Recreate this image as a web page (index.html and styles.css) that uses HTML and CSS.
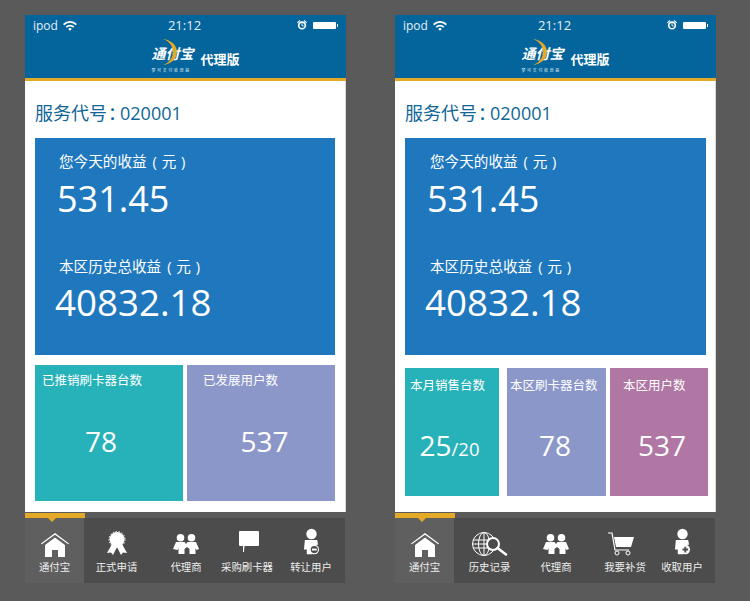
FILE: index.html
```html
<!DOCTYPE html>
<html lang="zh-CN">
<head>
  <meta charset="UTF-8" />
  <meta name="viewport" content="width=device-width, initial-scale=1.0" />
  <title>通付宝 代理版</title>
  <link rel="stylesheet" href="styles.css">
</head>
<body>
  <svg class="defs" width="0" height="0">
    <symbol id="i-wifi" viewBox="0 0 16 12"><path d="M0 4.2a11 11 0 0 1 16 0l-1.400 1.500a9 9 0 0 0-13.200 0zM3 7.200a7 7 0 0 1 10 0l-1.400 1.500a5 5 0 0 0-7.200 0zM5.900 10a3 3 0 0 1 4.200 0L8 12z" fill="#fff"/></symbol>
    <symbol id="i-alarm" viewBox="0 0 12 12"><circle cx="6" cy="6.500" r="4" fill="none" stroke="#fff" stroke-width="2"/><path d="M0 3l3-3 1 1-3 3zM12 3L9 0 8 1l3 3z" fill="#fff"/><path d="M6 4v3h2" fill="none" stroke="#fff"/></symbol>
    <symbol id="i-home" viewBox="0 0 28 24"><path d="M0 10.500L14 0l14 10.500-.8.800L14 1.800.8 11.300z" fill="#fff"/><path d="M14 4.500l10 7.500v12h-7v-7h-6v7H4V12z" fill="#fff"/></symbol>
    <symbol id="i-badge" viewBox="0 0 20 24"><path d="M5 13L0 22l4-.5 2 2.500 4-8 4 8 2-2.500 4 .5-5-9z" fill="#fff"/><circle cx="10" cy="8.500" r="7.500" fill="#fff"/><circle cx="10" cy="8.500" r="8" fill="none" stroke="#fff" stroke-dasharray="1.500 1.500"/></symbol>
    <symbol id="i-people" viewBox="0 0 26 20"><g fill="#fff"><circle cx="7.500" cy="3.800" r="3.800"/><circle cx="18.500" cy="3.800" r="3.800"/><path d="M3 8h8.500l1.500 2 1.500-2H23l3 7-2.500 1-1-2v6h-6v-5l-2.500-2-2.500 2v5h-6v-6l-1 2L0 15z"/></g></symbol>
    <symbol id="i-bubble" viewBox="0 0 20 21"><path d="M1 0h18a1 1 0 0 1 1 1v13a1 1 0 0 1-1 1H5.500L5 21h-1v-6H1a1 1 0 0 1-1-1V1a1 1 0 0 1 1-1z" fill="#fff"/></symbol>
    <symbol id="i-minus" viewBox="0 0 18 28"><circle cx="9" cy="5.500" r="5.500" fill="#fff"/><path d="M2 12h13l1 5a6.500 6.500 0 0 0-6 10H4v-5H1z" fill="#fff"/><circle cx="12" cy="22" r="5" fill="#fff"/><circle cx="12" cy="22" r="3.800" fill="#4c4c4c"/><path d="M9.500 21h5v2h-5z" fill="#fff"/></symbol>
    <symbol id="i-plus" viewBox="0 0 18 28"><circle cx="9" cy="5.500" r="5.500" fill="#fff"/><path d="M2 12h13l1 5a6.500 6.500 0 0 0-6 10H4v-5H1z" fill="#fff"/><circle cx="12" cy="22" r="5" fill="#fff"/><path d="M11 19h2v2h2v2h-2v2h-2v-2H9v-2h2z" fill="#4c4c4c"/></symbol>
    <symbol id="i-globe" viewBox="0 0 36 24"><g fill="none" stroke="#fff"><circle cx="12" cy="12" r="11.500"/><ellipse cx="12" cy="12" rx="5.500" ry="11.500"/><path d="M12 0v24M1 8h22M0.500 12h23M1 16h22"/></g><circle cx="21" cy="12" r="6" fill="#4c4c4c" stroke="#fff" stroke-width="2"/><path d="M25.500 16l8.500 6.500" stroke="#fff" stroke-width="2.500" stroke-linecap="round"/></symbol>
    <symbol id="i-cart" viewBox="0 0 26 24"><path d="M0 1h4l3 17h14" fill="none" stroke="#fff" stroke-width="1.200"/><path d="M6 5h20l-3 10H8z" fill="#fff"/><circle cx="9" cy="21" r="2" fill="none" stroke="#fff"/><circle cx="20" cy="21" r="2" fill="none" stroke="#fff"/></symbol>
    <symbol id="i-arc" viewBox="0 0 14 26"><path d="M0 0c8 1 14 6 14 13s-6 12-14 13c6-2 10-7 10-13S6 2 0 0z" fill="#e3a927"/></symbol>
  </svg>

  <section class="phone">
    <div class="status">
      <span class="carrier">ipod <svg class="wifi"><use href="#i-wifi"/></svg></span>
      <span class="clock">21:12</span>
      <span class="status-right"><svg class="alarm"><use href="#i-alarm"/></svg><i class="battery"></i></span>
    </div>
    <header class="brand">
      <div class="logo">
        <span class="logo-name">通付宝</span>
        <svg class="arc"><use href="#i-arc"/></svg>
        <span class="logo-sub">梦 可 支 付 收 款 器</span>
      </div>
      <span class="edition">代理版</span>
    </header>
    <main class="content">
      <h2 class="code">服务代号<span class="colon">：</span>020001</h2>
      <div class="earnings">
        <p class="earn-label">您今天的收益<span class="paren">( 元 )</span></p>
        <p class="earn-value">531.45</p>
        <p class="earn-label second">本区历史总收益<span class="paren">( 元 )</span></p>
        <p class="earn-value long">40832.18</p>
      </div>
      <div class="tiles two">
        <div class="tile teal"><p class="tile-label">已推销刷卡器台数</p><p class="tile-value">78</p></div>
        <div class="tile lilac"><p class="tile-label">已发展用户数</p><p class="tile-value">537</p></div>
      </div>
    </main>
    <div class="marker"></div>
    <nav class="tabs tabs-a">
      <a class="tab active"><svg class="ico home"><use href="#i-home"/></svg>通付宝</a>
      <a class="tab"><svg class="ico badge"><use href="#i-badge"/></svg>正式申请</a>
      <a class="tab"><svg class="ico people"><use href="#i-people"/></svg>代理商</a>
      <a class="tab"><svg class="ico bubble"><use href="#i-bubble"/></svg>采购刷卡器</a>
      <a class="tab"><svg class="ico person"><use href="#i-minus"/></svg>转让用户</a>
    </nav>
  </section>

  <section class="phone">
    <div class="status">
      <span class="carrier">ipod <svg class="wifi"><use href="#i-wifi"/></svg></span>
      <span class="clock">21:12</span>
      <span class="status-right"><svg class="alarm"><use href="#i-alarm"/></svg><i class="battery"></i></span>
    </div>
    <header class="brand">
      <div class="logo">
        <span class="logo-name">通付宝</span>
        <svg class="arc"><use href="#i-arc"/></svg>
        <span class="logo-sub">梦 可 支 付 收 款 器</span>
      </div>
      <span class="edition">代理版</span>
    </header>
    <main class="content">
      <h2 class="code">服务代号<span class="colon">：</span>020001</h2>
      <div class="earnings">
        <p class="earn-label">您今天的收益<span class="paren">( 元 )</span></p>
        <p class="earn-value">531.45</p>
        <p class="earn-label second">本区历史总收益<span class="paren">( 元 )</span></p>
        <p class="earn-value long">40832.18</p>
      </div>
      <div class="tiles three">
        <div class="tile teal"><p class="tile-label">本月销售台数</p><p class="tile-value">25<small>/20</small></p></div>
        <div class="tile lilac"><p class="tile-label">本区刷卡器台数</p><p class="tile-value">78</p></div>
        <div class="tile plum"><p class="tile-label">本区用户数</p><p class="tile-value">537</p></div>
      </div>
    </main>
    <div class="marker"></div>
    <nav class="tabs tabs-b">
      <a class="tab active"><svg class="ico home"><use href="#i-home"/></svg>通付宝</a>
      <a class="tab"><svg class="ico globe"><use href="#i-globe"/></svg>历史记录</a>
      <a class="tab"><svg class="ico people"><use href="#i-people"/></svg>代理商</a>
      <a class="tab"><svg class="ico cart"><use href="#i-cart"/></svg>我要补货</a>
      <a class="tab"><svg class="ico person"><use href="#i-plus"/></svg>收取用户</a>
    </nav>
  </section>
</body>
</html>
```

FILE: styles.css
```css
* { box-sizing: border-box; }
html, body { margin: 0; height: 601px; overflow: hidden; }
body {
  display: flex; gap: 49px; padding: 15px 0 0 25px;
  background: #5a5a5a; color: #fff;
  font-family: "Open Sans", "Noto Sans CJK SC", sans-serif;
}
p, h2 { margin: 0; font-weight: normal; }
.defs { position: absolute; }

.phone { width: 321px; height: 568px; display: flex; flex-direction: column; }

/* status bar */
.status {
  height: 22px; padding: 0 10px 2px 8px; background: #04649c;
  display: grid; grid-template-columns: 1fr auto 1fr; align-items: center;
  font-size: 12px; color: #e4eef5;
}
.carrier { display: flex; align-items: center; gap: 5px; }
.wifi { width: 14px; height: 11px; }
.clock { font-size: 13px; }
.status-right { display: flex; justify-content: flex-end; align-items: center; gap: 6px; }
.alarm { width: 10px; height: 10px; }
.battery { position: relative; width: 23px; height: 7px; background: #fff; border-radius: 1px; }
.battery::after { content: ""; position: absolute; left: 24px; top: 2px; width: 1px; height: 3px; background: #fff; }

/* logo row */
.brand {
  height: 44px; background: #04649c; border-bottom: 3px solid #e3a927;
  display: flex; justify-content: center; align-items: flex-start; gap: 7px; padding-left: 20px;
}
.logo { position: relative; width: 42px; height: 38px; margin-top: 2px; }
.logo-name {
  position: absolute; left: 0; top: 5px; white-space: nowrap;
  font-size: 14px; font-weight: bold; font-style: italic; line-height: 20px;
}
.arc { position: absolute; left: 12px; top: 0; width: 14px; height: 26px; }
.logo-sub {
  position: absolute; left: 0; top: 29px; font-size: 4px; line-height: 6px;
  letter-spacing: .3px; white-space: nowrap; color: #dfe9f0;
}
.edition { font-size: 13px; font-weight: bold; line-height: 18px; margin-top: 13px; }

/* content */
.content { height: 431px; background: #fff; padding: 0 10px; border-right: 1px solid #d8d8d8; }
.code { font-size: 18px; line-height: 24px; color: #0f6596; padding-top: 20px; height: 57px; white-space: nowrap; }
.colon { padding-left: 1px; letter-spacing: -6px; }

.earnings { height: 217px; background: #1f78be; padding: 12px 0 0 24px; }
.phone + .phone .earnings { margin-right: -1px; padding-left: 25px; }
.earn-label { font-size: 14.6px; line-height: 22px; white-space: nowrap; }
.paren { margin-left: 6px; word-spacing: 1px; }
.earn-label.second { margin-top: 31px; }
.earn-value { font-size: 36px; line-height: 50px; margin: 2px 0 0 -2px; }
.phone + .phone .earn-value { margin-left: -3px; }
.earn-label.second + .earn-value { margin-top: 0; }
.earn-value.long { font-size: 36.7px; margin-left: -4px; }
.phone + .phone .earn-value.long { margin-left: -5px; }

.tiles { display: flex; }
.tiles.two { gap: 4px; margin-top: 10px; height: 136px; }
.tiles.two .tile { width: 148px; }
.tiles.three { gap: 8px; margin-top: 13px; height: 128px; }
.tile { flex: none; padding: 5px 0 0 7px; }
.three .teal { width: 94px; }
.three .lilac { width: 99px; margin-right: -4px; }
.three .plum { width: 98px; }

.tile-label { font-size: 12.5px; line-height: 22px; white-space: nowrap; }
.tile-value { font-size: 28px; line-height: 40px; text-align: center; margin-top: 29px; }
.tile-value small { font-size: 18.5px; }
.two .teal .tile-value { padding-right: 23px; }
.two .lilac .tile-label { padding-left: 9px; }
.three .tile { padding: 7px 0 0 5px; }
.three .lilac .tile-label { margin-left: -2px; }
.three .plum .tile-label { padding-left: 8px; }
.three .tile-value { margin-top: 28px; }
.three .teal .tile-value { padding-right: 10px; }
.three .lilac .tile-value { padding-right: 8px; }
.three .plum .tile-value { padding-left: 1px; }
.teal { background: #27b2b9; }
.lilac { background: #8c97c9; }
.plum { background: #b076a4; }

/* tab bar */
.marker { position: relative; width: 60px; height: 5px; background: #e3a927; margin-top: 1px; }
.marker::after {
  content: ""; position: absolute; left: 23px; top: 5px;
  border: 4px solid transparent; border-top-color: #e3a927; border-bottom: 0;
}
.tabs { flex: 1; display: grid; background: #4c4c4c; margin-right: 1px; }
.tabs-a { grid-template-columns: 59px 65px 74px 48px 74px; }
.tabs-b { grid-template-columns: 59px 71px 62px 76px 52px; }
.tabs-a .tab:last-child { padding-left: 6px; }
.tabs-b .tab:last-child { padding-right: 14px; }
.tab {
  display: flex; flex-direction: column; align-items: center; justify-content: flex-end;
  padding-bottom: 9px; font-size: 10.4px; line-height: 14px; color: #eee; white-space: nowrap;
}
.tab.active { background: #5f5f5f; }
.ico { flex: none; margin-bottom: 4px; }
.home { width: 28px; height: 24px; margin-bottom: 3px; }
.badge { width: 20px; height: 24px; margin-bottom: 5px; }
.people { width: 26px; height: 20px; margin-bottom: 6px; }
.bubble { width: 20px; height: 21px; margin: 0 0 8px 4px; }
.person { width: 17px; height: 28px; }
.globe { width: 36px; height: 24px; }
.cart { width: 26px; height: 24px; margin-right: 8px; }
```
